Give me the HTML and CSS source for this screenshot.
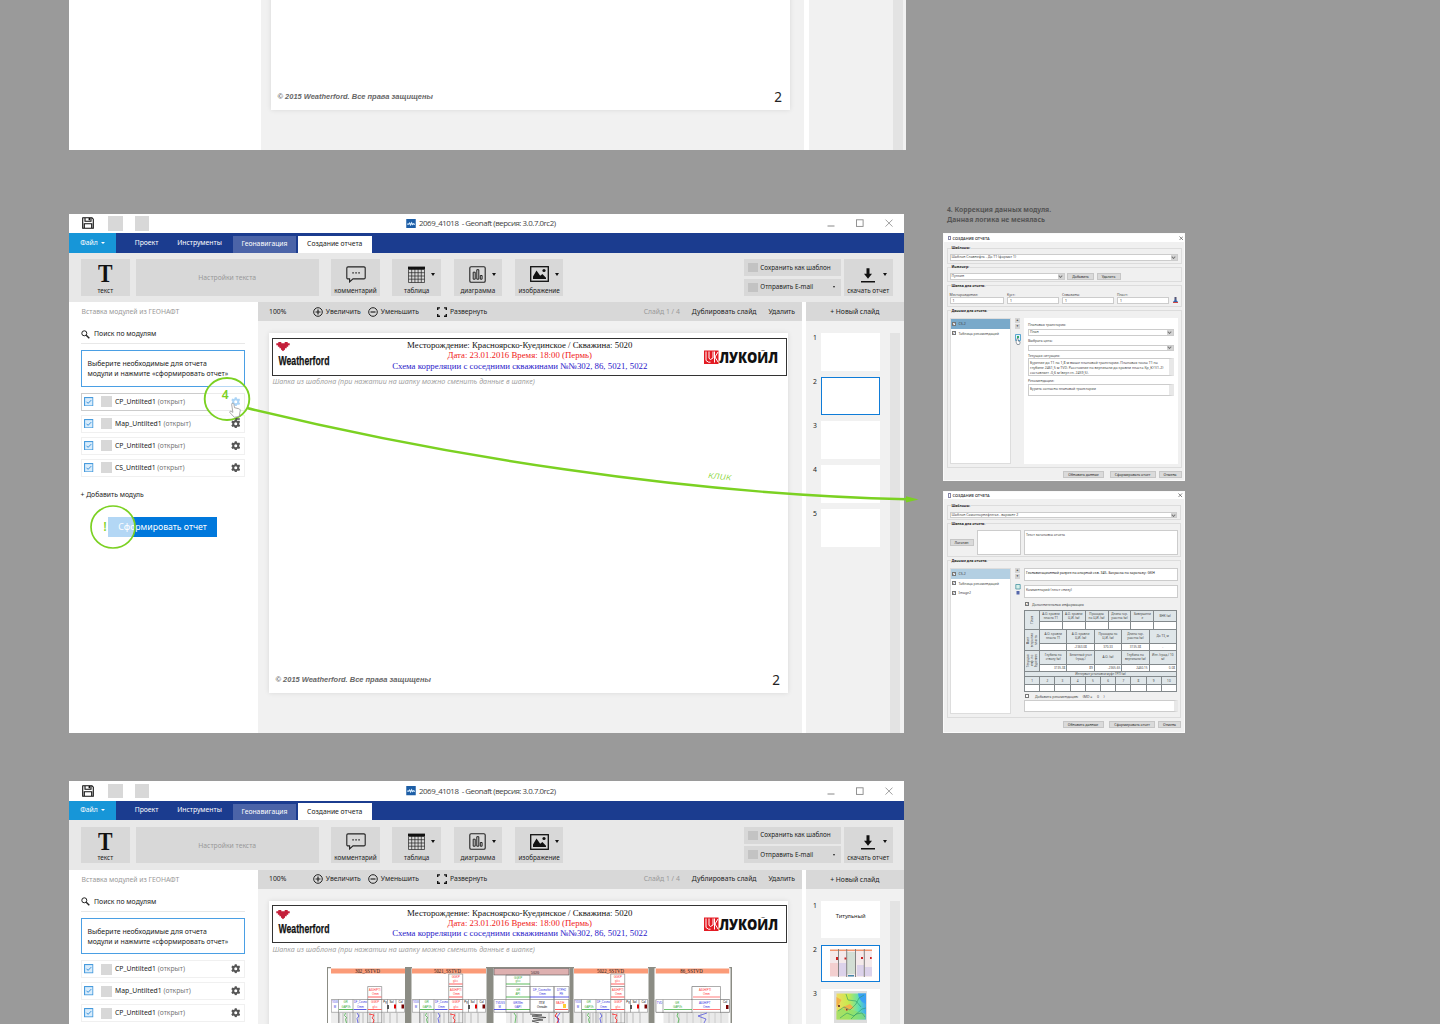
FILE: index.html
```
<!DOCTYPE html>
<html lang="ru">
<head>
<meta charset="utf-8">
<title>Создание отчета</title>
<link rel="stylesheet" href="styles.css">
</head>
<body>
<svg class="defs" width="0" height="0">
  <symbol id="save" viewBox="0 0 12 12"><path d="M1 .7h9l1.3 1.5v9.1H.7V.9z M3 .7v3.6h6V.7 M2.3 11.3V6.8h7.4v4.5" fill="none" stroke="#111" stroke-width="1.1"/><path d="M6.6 1h1.5v2.3H6.6z" fill="#111"/></symbol>
  <symbol id="logo" viewBox="0 0 10 10"><path d="M0 0h10v10H0z" fill="#1d5ea6"/><path d="M1 5.400h1.600l1-1.200 1 2 1-2.200 1 1.900 1-1 1 .7H9" fill="none" stroke="#d7ecff" stroke-width="1.200"/></symbol>
  <symbol id="comment" viewBox="0 0 20 17"><path d="M2 .9h16a1.2 1.2 0 0 1 1.2 1.2v9.6a1.2 1.2 0 0 1-1.2 1.2H7L3.6 15.9V12.9H2A1.2 1.2 0 0 1 .8 11.700V2.100A1.200 1.200 0 0 1 2 .9z" fill="none" stroke="#222" stroke-width="1.1"/><path d="M6.300 6.200h1.500v1.300H6.300zM9.300 6.200h1.500v1.300H9.300zM12.300 6.200h1.500v1.300h-1.500z" fill="#222"/></symbol>
  <symbol id="table" viewBox="0 0 17 17"><path d="M.5 3.500h16v13H.5zM.5 6.700h16M.5 10h16M.5 13.200h16M3.700 3v13.500M6.900 3v13.500M10.100 3v13.500M13.300 3v13.500" fill="none" stroke="#222" stroke-width=".7"/><path d="M0 .6h17v2.700H0z" fill="#111"/></symbol>
  <symbol id="chart" viewBox="0 0 17 17"><rect x=".8" y=".8" width="15.400" height="15.400" rx="1.300" fill="none" stroke="#222" stroke-width="1.100"/><path d="M4.200 6.200h2v7h-2zM7.800 3.700h2v9.500h-2zM11.300 9.500h1.800v3.700h-1.800z" fill="none" stroke="#222" stroke-width="1"/></symbol>
  <symbol id="image" viewBox="0 0 19 16"><rect x=".7" y=".7" width="17.600" height="14.600" fill="none" stroke="#111" stroke-width="1.300"/><path d="M3 13V10.600L6.500 4.500l3.700 5.200 2.200-1.600L16 11.700V13z" fill="#111"/><circle cx="14" cy="4.500" r="1.600" fill="#111"/></symbol>
  <symbol id="download" viewBox="0 0 14 15"><path d="M5.500.3h3v5.500H11L7 10.800 3 5.800h2.500zM0 13h14v1.400H0z" fill="#111"/></symbol>
  <symbol id="plus" viewBox="0 0 10 10"><circle cx="5" cy="5" r="4.300" fill="none" stroke="#222"/><path d="M2.500 5h5M5 2.500v5" stroke="#222" stroke-width="1.200"/></symbol>
  <symbol id="minus" viewBox="0 0 10 10"><circle cx="5" cy="5" r="4.300" fill="none" stroke="#222"/><path d="M2.500 5h5" stroke="#222" stroke-width="1.200"/></symbol>
  <symbol id="expand" viewBox="0 0 10 10"><path d="M.7 3V.9H3M7 .9h2.300V3M9.300 7v2.200H7M3 9.200H.7V7" fill="none" stroke="#111" stroke-width="1.400"/></symbol>
  <symbol id="search" viewBox="0 0 9 9"><circle cx="3.300" cy="3.300" r="2.500" fill="none" stroke="#222"/><path d="M5.200 5.200L8.300 8.300" stroke="#222" stroke-width="1.400"/></symbol>
  <symbol id="check" viewBox="0 0 10 10"><rect x=".6" y=".6" width="8.800" height="8.800" fill="#d9ecfb" stroke="#3f97dc" stroke-width="1.100"/><path d="M2.600 5l1.700 1.700 3.300-3.400" fill="none" stroke="#2f8bd6" stroke-width="1"/></symbol>
  <symbol id="gear" viewBox="0 0 10 10"><path d="M4 .2h2l.3 1.300 1 .5 1.300-.5 1.100 1.800-1 1v1.400l1 1-1.100 1.800-1.300-.5-1 .5L6 9.800H4l-.3-1.300-1-.5-1.300.5-1.100-1.800 1-1V4.300l-1-1 1.100-1.800 1.300.5 1-.5z M5 3.400a1.600 1.600 0 1 0 0 3.200a1.600 1.600 0 1 0 0-3.200z" fill="currentColor" fill-rule="evenodd"/></symbol>
  <symbol id="winbtns" viewBox="0 0 66 8"><path d="M.5 7h7" stroke="#888"/><rect x="29.500" y=".8" width="6.600" height="6.600" fill="none" stroke="#888" stroke-width=".9"/><path d="M58.500.6l7 7M65.500.6l-7 7" stroke="#888" stroke-width=".8"/></symbol>
  <symbol id="weatherford" viewBox="0 0 56 26"><path d="M3.800 1h3v1.300H10.200V1h3v1.300h2v2h-1.500v1.500h-1.500v1.500H10.500v1.500H6.500V7.300H4.900V5.800H3.400V4.300H1.800v-2h2z M6.600 8.500h3.800l-1.900 1.800z" fill="#c41f3a"/><text x="4" y="23.500" font-family="Liberation Sans" font-weight="700" font-size="12" textLength="51" lengthAdjust="spacingAndGlyphs" fill="#111" stroke="#111" stroke-width=".25">Weatherford</text></symbol>
  <symbol id="lukoil" viewBox="0 0 75 15"><path d="M0 .5h14.500v13.500H0z" fill="#e31b23"/><path d="M2 1.500v9l2.500 1.700h2M5 1.500v6.800l1.500 1.200L9 8V1.500M10.500 1.500v11M14 2l-3 5 3 5" fill="none" stroke="#fff" stroke-width="1"/><text x="15.200" y="12.600" font-family="Open Sans" font-weight="800" font-size="15.600" textLength="59" lengthAdjust="spacingAndGlyphs" fill="#111">ЛУКОЙЛ</text></symbol>
  <symbol id="well" viewBox="0 0 74 56">
    <path d="M0 0h74v56H0z" fill="#fff"/><path d="M0 1.500h74v5H0z" fill="#fb9b78"/>
    <path d="M0 46h74v10H0z" fill="#eee"/><path d="M8.500 46v10M12 46v10M16 46v10M19 46v10M24 46v10M28 46v10M32 46v10M39 46v10M43 46v10M47 46v10M53 46v10M59 46v10M66 46v10" stroke="#c4c4c4" stroke-width="1.200"/>
    <path d="M.3 32.500h73.400v12.800H.3zM7.500 32.500V56M22 32.500V56M36.700 19.500h14V56h-14zM56.500 32.500v12.800M65 32.500v12.800M36.700 32.500h14" fill="none" stroke="#777" stroke-width=".6"/>
    <g font-family="Liberation Sans" font-size="2.800"><text x="1" y="36.300" fill="#33d" textLength="6" lengthAdjust="spacingAndGlyphs">TVDSS</text><text x="2.700" y="40.500" fill="#33d">M</text><text x="12.500" y="36.300" fill="#3a3">GR</text><text x="10.500" y="40.500" fill="#3a3">GAPI/h</text><text x="23" y="36.300" fill="#33d" textLength="13" lengthAdjust="spacingAndGlyphs">DF_Cosmo</text><text x="26" y="40.500" fill="#33d">Omm</text><text x="38" y="23.500" fill="#f33" textLength="11.500" lengthAdjust="spacingAndGlyphs">A40H/PTI</text><text x="41" y="27.500" fill="#f33">Omm</text><text x="40" y="36.300" fill="#f33">GGKP</text><text x="41.500" y="40.500" fill="#f33">g/cc</text><text x="52.300" y="36">Pg</text><text x="58.500" y="36">Sol</text><text x="67.500" y="36">Col</text></g>
    <path d="M8 42.500h14" stroke="#3a3" stroke-width=".8"/><path d="M22.500 42.500h13" stroke="#33d" stroke-width=".8"/><path d="M37 42.500h13.500M37 30h13.500" stroke="#f33" stroke-width=".8"/>
    <path d="M56 38h2v4h-2z" fill="#555"/><path d="M63 37.500h2v4h-2z" fill="#d00"/><path d="M70.500 37.500h2.500v4h-2.500z" fill="#700"/>
    <path d="M14.500 46l-1 2.500 2 2-1 2 1 3.500" fill="none" stroke="#3a3" stroke-width=".7"/><path d="M26 46l2 3-2 2.500 1 4.500" fill="none" stroke="#33d" stroke-width=".7"/><path d="M38 47l5 1-2 3 2 2-1 3" fill="none" stroke="#f22" stroke-width=".8"/>
  </symbol>
  <symbol id="mini" viewBox="0 0 42 28"><path d="M0 1h42v27H0z" fill="#f4e9ea"/><path d="M0 .5h42v1.400H0z" fill="#f0946f"/><path d="M0 14h8v13H0z" fill="#f3cfcf"/><path d="M9 14h7.500v13H9zM27 16h7v11h-7zM35 18h7v9h-7z" fill="#dcd2ea"/><path d="M17 3h8v22h-8z" fill="#d3ded4"/><path d="M8.500 0v28M16.700 0v28M25.500 0v28M34.300 0v28" stroke="#777" stroke-width=".9"/><path d="M6 8h2v3H6zM14.500 8.500h1.800v2h-1.800zM31 8h2v2h-2zM40 8h1.700v2H40z" fill="#c22"/><path d="M18 26h6v1.500h-6z" fill="#48a"/></symbol>
</svg>

<section class="board board-prev">
  <div class="side"></div>
  <div class="stage"><div class="slide"><div class="slide-foot"><span class="copy">© 2015 Weatherford. Все права защищены</span><span class="pageno">2</span></div></div></div>
  <div class="slides"><div class="scroll"></div></div>
</section>

<section class="board board-main">
  <header class="titlebar">
    <svg class="ic-save"><use href="#save"/></svg><i class="sq"></i><i class="sq"></i>
    <div class="apptitle"><svg class="ic-logo"><use href="#logo"/></svg><span>2069_41018&nbsp; - Geonaft (версия: 3.0.7.0rc2)</span></div>
    <svg class="winbtns"><use href="#winbtns"/></svg>
  </header>
  <nav class="tabs"><span class="tab file">Файл<i class="caret"></i></span><span class="tab t-proj">Проект</span><span class="tab t-inst">Инструменты</span><span class="tab t-geo">Геонавигация</span><span class="tab t-rep">Создание отчета</span></nav>
  <div class="ribbon">
    <div class="rb"><b class="bigt">T</b><span>текст</span></div>
    <div class="rb settings">Настройки текста</div>
    <div class="rb"><div class="ico"><svg class="i-com"><use href="#comment"/></svg></div><span>комментарий</span></div>
    <div class="rb"><div class="ico"><svg class="i-tab"><use href="#table"/></svg><i class="caret"></i></div><span>таблица</span></div>
    <div class="rb"><div class="ico"><svg class="i-tab"><use href="#chart"/></svg><i class="caret"></i></div><span>диаграмма</span></div>
    <div class="rb"><div class="ico"><svg class="i-img"><use href="#image"/></svg><i class="caret"></i></div><span>изображение</span></div>
    <div class="export"><div class="ex"><i></i>Сохранить как шаблон</div><div class="ex"><i></i>Отправить E-mail<b class="caret"></b></div></div>
    <div class="rb dl"><div class="ico"><svg class="i-dl"><use href="#download"/></svg><i class="caret"></i></div><span>скачать отчет</span></div>
  </div>
  <div class="work">
    <aside class="side">
      <div class="side-title">Вставка модулей из ГЕОНАФТ</div>
      <div class="search"><svg><use href="#search"/></svg>Поиск по модулям</div>
      <div class="hint">Выберите необходимые для отчета<br>модули и нажмите «сформировать отчет»</div>
      <div class="mod active"><svg class="chk"><use href="#check"/></svg><i></i><span>CP_Untilted1 <em>(открыт)</em></span><svg class="gear"><use href="#gear"/></svg></div>
      <div class="mod"><svg class="chk"><use href="#check"/></svg><i></i><span>Map_Untilted1 <em>(открыт)</em></span><svg class="gear"><use href="#gear"/></svg></div>
      <div class="mod"><svg class="chk"><use href="#check"/></svg><i></i><span>CP_Untilted1 <em>(открыт)</em></span><svg class="gear"><use href="#gear"/></svg></div>
      <div class="mod"><svg class="chk"><use href="#check"/></svg><i></i><span>CS_Untilted1 <em>(открыт)</em></span><svg class="gear"><use href="#gear"/></svg></div>
      <div class="addmod">+ Добавить модуль</div>
      <div class="build">Сформировать отчет</div>
    </aside>
    <main class="stage">
      <div class="toolbar"><span class="pct">100%</span><svg><use href="#plus"/></svg><span class="zin">Увеличить</span><svg><use href="#minus"/></svg><span class="zout">Уменьшить</span><svg><use href="#expand"/></svg><span>Развернуть</span><span class="count">Слайд 1 / 4</span><span class="dup">Дублировать слайд</span><span>Удалить</span></div>
      <div class="slide">
        <div class="head"><svg class="wf"><use href="#weatherford"/></svg><div class="htext"><p>Месторождение: Красноярско-Куединское / Скважина: 5020</p><p class="red">Дата: 23.01.2016 Время: 18:00 (Пермь)</p><p class="blue">Схема корреляции с соседними скважинами №№302, 86, 5021, 5022</p></div><svg class="lk"><use href="#lukoil"/></svg></div>
        <div class="note">Шапка из шаблона (при нажатии на шапку можно сменить данные в шапке)</div>
        <div class="slide-foot"><span class="copy">© 2015 Weatherford. Все права защищены</span><span class="pageno">2</span></div>
      </div>
    </main>
    <div class="slides">
      <div class="newslide">+ Новый слайд</div>
      <div class="thumbrow"><ol class="thumbs"><li>1<div></div></li><li>2<div class="sel"></div></li><li>3<div></div></li><li>4<div></div></li><li>5<div></div></li></ol><div class="scroll"></div></div>
    </div>
  </div>
</section>

<section class="board board-next">
  <header class="titlebar">
    <svg class="ic-save"><use href="#save"/></svg><i class="sq"></i><i class="sq"></i>
    <div class="apptitle"><svg class="ic-logo"><use href="#logo"/></svg><span>2069_41018&nbsp; - Geonaft (версия: 3.0.7.0rc2)</span></div>
    <svg class="winbtns"><use href="#winbtns"/></svg>
  </header>
  <nav class="tabs"><span class="tab file">Файл<i class="caret"></i></span><span class="tab t-proj">Проект</span><span class="tab t-inst">Инструменты</span><span class="tab t-geo">Геонавигация</span><span class="tab t-rep">Создание отчета</span></nav>
  <div class="ribbon">
    <div class="rb"><b class="bigt">T</b><span>текст</span></div>
    <div class="rb settings">Настройки текста</div>
    <div class="rb"><div class="ico"><svg class="i-com"><use href="#comment"/></svg></div><span>комментарий</span></div>
    <div class="rb"><div class="ico"><svg class="i-tab"><use href="#table"/></svg><i class="caret"></i></div><span>таблица</span></div>
    <div class="rb"><div class="ico"><svg class="i-tab"><use href="#chart"/></svg><i class="caret"></i></div><span>диаграмма</span></div>
    <div class="rb"><div class="ico"><svg class="i-img"><use href="#image"/></svg><i class="caret"></i></div><span>изображение</span></div>
    <div class="export"><div class="ex"><i></i>Сохранить как шаблон</div><div class="ex"><i></i>Отправить E-mail<b class="caret"></b></div></div>
    <div class="rb dl"><div class="ico"><svg class="i-dl"><use href="#download"/></svg><i class="caret"></i></div><span>скачать отчет</span></div>
  </div>
  <div class="work">
    <aside class="side">
      <div class="side-title">Вставка модулей из ГЕОНАФТ</div>
      <div class="search"><svg><use href="#search"/></svg>Поиск по модулям</div>
      <div class="hint">Выберите необходимые для отчета<br>модули и нажмите «сформировать отчет»</div>
      <div class="mod"><svg class="chk"><use href="#check"/></svg><i></i><span>CP_Untilted1 <em>(открыт)</em></span><svg class="gear"><use href="#gear"/></svg></div>
      <div class="mod"><svg class="chk"><use href="#check"/></svg><i></i><span>Map_Untilted1 <em>(открыт)</em></span><svg class="gear"><use href="#gear"/></svg></div>
      <div class="mod"><svg class="chk"><use href="#check"/></svg><i></i><span>CP_Untilted1 <em>(открыт)</em></span><svg class="gear"><use href="#gear"/></svg></div>
    </aside>
    <main class="stage">
      <div class="toolbar"><span class="pct">100%</span><svg><use href="#plus"/></svg><span class="zin">Увеличить</span><svg><use href="#minus"/></svg><span class="zout">Уменьшить</span><svg><use href="#expand"/></svg><span>Развернуть</span><span class="count">Слайд 1 / 4</span><span class="dup">Дублировать слайд</span><span>Удалить</span></div>
      <div class="slide">
        <div class="head"><svg class="wf"><use href="#weatherford"/></svg><div class="htext"><p>Месторождение: Красноярско-Куединское / Скважина: 5020</p><p class="red">Дата: 23.01.2016 Время: 18:00 (Пермь)</p><p class="blue">Схема корреляции с соседними скважинами №№302, 86, 5021, 5022</p></div><svg class="lk"><use href="#lukoil"/></svg></div>
        <div class="note">Шапка из шаблона (при нажатии на шапку можно сменить данные в шапке)</div>
        <svg class="logs" viewBox="0 0 405 56" font-family="Liberation Sans">
          <path d="M0 0h405v56H0z" fill="#8b8c84"/><path d="M1 1.200h76V56H1zM84.500 1.200h75V56h-75zM166.500 1.200h76V56h-76zM246.500 1.200h75V56h-75zM327.500 1.200H403.500V56H327.500z" fill="#fff"/>
          <use href="#well" x="4" width="74" height="56"/><use href="#well" x="85" width="74" height="56"/><use href="#well" x="247" width="74" height="56"/><use href="#well" x="328.500" width="74" height="56"/>
          <path d="M121.700 7h14v12.500h-14zM283.700 7h14v12.500h-14z" fill="#fff" stroke="#777" stroke-width=".6"/>
          <path d="M122 17h13.500M284 17h13.500" stroke="#f33" stroke-width=".8"/><g font-size="2.800" fill="#f33"><text x="124.700" y="11">GGKP</text><text x="126" y="15">g/cc</text><text x="286.700" y="11">GGKP</text><text x="288" y="15">g/cc</text></g>
          <path d="M329 32.500h73.500v12.800H329zM336 32.500V56M365 19.500h28.500V56H365z" fill="#fff" stroke="#777" stroke-width=".6"/><path d="M329 46h73.500v10H329zM364 19.800h-35v12.400h35z" fill="#fff"/>
          <path d="M336.500 46h65v10h-65z" fill="#e9e9e9"/><path d="M342 46v10M347 46v10M352 46v10M360 46v10M366 46v10M374 46v10M382 46v10M388 46v10M394 46v10" stroke="#ccc"/>
          <path d="M351 46l-1 3 2 3-1 4" fill="none" stroke="#3a3" stroke-width=".7"/><path d="M380 46l-9 3 8 3-2 4" fill="none" stroke="#44d" stroke-width=".7"/><path d="M366 30h27M366 42.500h27" stroke="#f44" stroke-width=".7"/><path d="M337 42.500h28" stroke="#3a3" stroke-width=".7"/>
          <g font-size="2.800"><text x="329.700" y="36.500" fill="#33d">TVD</text><text x="348" y="36.500" fill="#3a3">GR</text><text x="346" y="41" fill="#3a3">GAPI/h</text><text x="372" y="23.500" fill="#f33">A40H/PTI</text><text x="376" y="27.500" fill="#f33">Omm</text><text x="372" y="36.500" fill="#33d">A40H/PT</text><text x="376" y="41" fill="#33d">Omm</text><text x="396" y="36">Col</text></g><path d="M399 38h2.500v4H399z" fill="#700"/>
          <path d="M167 1.500h75V8h-75z" fill="#deb0b0" stroke="#555" stroke-width=".6"/>
          <path d="M179 8h24v37.300h-24zM203 19.500h24v25.800h-24zM227 19.500h15v25.800h-15zM167 32.500h75v12.800h-75zM179 19.500h24" fill="none" stroke="#777" stroke-width=".6"/>
          <path d="M179 17h24M179 30h24M179 42.500h24" stroke="#3a3" stroke-width=".8"/><path d="M203 30h39M167 42.500h12" stroke="#33d" stroke-width=".8"/><path d="M228 42.500h13" stroke="#f33" stroke-width=".8"/>
          <path d="M179 46h63v10h-63z" fill="#eee"/><path d="M184 46v10M190 46v10M196 46v10M222 46v10M227 46v10M236 46v10" stroke="#bbb"/><path d="M203 47l12 1-10 1 14 1.500-13 1 10 1.500-11 1 7 2" fill="none" stroke="#444" stroke-width=".8"/><path d="M187 46l2 3-1 7" fill="none" stroke="#3a3" stroke-width=".7"/><path d="M230 46l-2 3 4 3-2 4" fill="none" stroke="#e22"/><path d="M233 46l-3 4 2 6" fill="none" stroke="#33d" stroke-width=".7"/><path d="M236 37h3v4h-3z" fill="#fc3"/>
          <g font-size="2.800"><text x="187" y="11.500" fill="#3a3">GGKP</text><text x="188.500" y="15" fill="#3a3">g/cc</text><text x="189" y="24" fill="#3a3">GR</text><text x="188.500" y="28" fill="#3a3">API</text><text x="206" y="23.500" fill="#33d">DF_Cosmofite</text><text x="212" y="27.500" fill="#33d">Omm</text><text x="230" y="23.500" fill="#33d">DTPH2</text><text x="232.500" y="27.500" fill="#33d">PE</text><text x="168.500" y="36.500" fill="#33d">TVDSS</text><text x="171.500" y="41" fill="#33d">M</text><text x="186" y="36.500" fill="#33d">GR/Wm</text><text x="187.500" y="41" fill="#33d">GAPI</text><text x="212" y="36.500">ПГИ</text><text x="210" y="41">Онлайн</text><text x="229" y="36.500" fill="#f33">BAZ/H</text></g>
          <g font-family="Liberation Serif" font-size="5.800" text-anchor="middle" fill="#222"><text x="40.500" y="5.800" textLength="25" lengthAdjust="spacingAndGlyphs">302_SSTVD</text><text x="120.500" y="5.800" textLength="27" lengthAdjust="spacingAndGlyphs">5021_SSTVD</text><text x="208" y="6.500" font-size="4.200">5020</text><text x="283.500" y="5.800" textLength="27" lengthAdjust="spacingAndGlyphs">5022_SSTVD</text><text x="364.500" y="5.800" textLength="22.500" lengthAdjust="spacingAndGlyphs">86_SSTVD</text></g>
        </svg>
      </div>
    </main>
    <div class="slides">
      <div class="newslide">+ Новый слайд</div>
      <div class="thumbrow"><ol class="thumbs"><li>1<div>Титульный</div></li><li>2<div class="sel"><svg class="mini"><use href="#mini"/></svg></div></li><li>3<div><svg class="map" viewBox="0 0 33 32"><defs><linearGradient id="g"><stop offset="0" stop-color="#f0dc62"/><stop offset=".4" stop-color="#c6ea4e"/><stop offset=".75" stop-color="#5fe0b0"/><stop offset="1" stop-color="#3fa8f0"/></linearGradient></defs><path d="M0 0h33v32H0z" fill="#ddd"/><path d="M2.500 2.500h29.500v26H2.500z" fill="url(#g)"/><path d="M2.500 20c8-5 14-1 22 1l7 2v5.500h-29z" fill="#8be06a" opacity=".7"/><path d="M24 2.500h8V13l-4-2-3-4z" fill="#3aa0f2"/><path d="M2.500 6l5 3-3 5-2 2zM9 16l7-3 4 4-8 3z" fill="#f2b04a"/><path d="M4 20l6-4 6 3 6-6 3-6 5-3M6 27l7-5 7 3 8-7 4-1M12 3l2 6 8 1 5 6M17 28l5-5 6-1 3 4" fill="none" stroke="#2a9a6a" stroke-width=".6"/><path d="M4 14h2v2H4zM12 18h1.500v1.500H12z" fill="#743"/></svg></div></li></ol><div class="scroll"></div></div>
    </div>
  </div>
</section>

<h4 class="caption">4. Коррекция данных модуля.<br>Данная логика не менялась</h4>

<section class="dlg dlg1">
  <header><i></i><b>СОЗДАНИЕ ОТЧЕТА</b><svg class="x" viewBox="0 0 5 5"><path d="M.5.500l4 4M4.500.500l-4 4" stroke="#444" stroke-width=".7"/></svg></header>
  <div class="grp g-tpl"><h6>Шаблоны:</h6><div class="sel-box">Шаблон Славнефть - До Т1 (формат 1)<s></s></div></div>
  <div class="grp g-eng"><h6>Инженер:</h6><div class="row"><div class="sel-box w115">Пупкин<s></s></div><div class="btn w27">Добавить</div><div class="btn w24">Удалить</div></div></div>
  <div class="grp g-cap"><h6>Шапка для отчета:</h6><div class="fields"><label>Месторождение:<span>1</span></label><label>Куст:<span>1</span></label><label>Скважина:<span>1</span></label><label>Пласт:<span>1</span></label><svg viewBox="0 0 5 6"><path d="M1.500 0h2v3h-2z" fill="#557"/><path d="M0 5l2.500-3L5 5z" fill="#36a"/><path d="M0 5h5v1H0z" fill="#c44"/></svg></div></div>
  <div class="grp g-data"><h6>Данные для отчета:</h6><div class="cols">
    <div class="list"><p class="on"><i>✓</i>CS-2</p><p><i>✓</i>Таблица рекомендаций</p></div>
    <div class="mid"><i>▴</i><i>▾</i><svg viewBox="0 0 6 11"><path d="M.5.500h5v6h-5z" fill="#e2f3fb" stroke="#3a94c8" stroke-width=".8"/><path d="M2 2h2v2H2z" fill="#3a6"/><path d="M2 4.500h1.200v2.500l1.800.6V9L4.300 10.500H2.200L1 8z" fill="#fff" stroke="#345" stroke-width=".5"/></svg></div>
    <div class="form"><label>Плановая траектория:</label><div class="sel-box">План<s></s></div><label>Выбрать цель:</label><div class="sel-box"><s></s></div><label>Текущая ситуация:</label><div class="area a18">Бурение до Т1 на 1,8 м выше плановой траектории. Плановая точка Т1 на<br>глубине 2461,5 м TVD. Расстояние по вертикали до кровли пласта Kp_Ю1(1-2)<br>составляет -0,6 м (верт.гл. 2459,5).</div><label>Рекомендации:</label><div class="area a12">Бурить согласно плановой траектории</div></div>
  </div></div>
  <footer><div class="btn w40">Обновить данные</div><div class="btn w46">Сформировать отчет</div><div class="btn w23">Отмена</div></footer>
</section>

<section class="dlg dlg2">
  <header><i></i><b>СОЗДАНИЕ ОТЧЕТА</b><svg class="x" viewBox="0 0 5 5"><path d="M.5.500l4 4M4.500.500l-4 4" stroke="#444" stroke-width=".7"/></svg></header>
  <div class="grp g-tpl"><h6>Шаблоны:</h6><div class="sel-box">Шаблон Самотлорнефтегаз - вариант 2<s></s></div></div>
  <div class="grp g-logo"><h6>Шапка для отчета:</h6><div class="logo-row"><div class="btn w24">Логотип</div><div class="pic"></div><div class="area">Текст заголовка отчета</div></div></div>
  <div class="grp g-data"><h6>Данные для отчета:</h6><div class="cols">
    <div class="list"><p class="on"><i>✓</i>CS-2</p><p><i>✓</i>Таблица рекомендаций</p><p><i>✓</i>Image2</p></div>
    <div class="mid"><i>▴</i><i>▾</i><svg viewBox="0 0 6 11"><path d="M.8.500h4.400v4.500H.8z" fill="#d6efe8" stroke="#389" stroke-width=".7"/><path d="M1.500 7h3v3.500h-3z" fill="#56a"/></svg></div>
    <div class="form f2">
      <div class="area dark">Геонавигационный разрез по опорной скв. 345. Закраска по каротажу: GKH</div>
      <div class="area">Комментарий (текст снизу)</div>
      <p class="opt"><i>✓</i>Дополнительная информация</p>
      <div class="tbl">
        <div class="blk b1"><b><span>План</span></b><div class="c6"><u>А.О. кровли<br>пласта Т1</u><u>А.О. кровли<br>Ц.И. (м)</u><u>Проходка<br>по Ц.И. (м)</u><u>Длина гор.<br>участка (м)</u><u>Завершени<br>е</u><u>ВНК (м)</u></div><div class="c6 val"><u></u><u></u><u></u><u></u><u></u><u></u></div></div>
        <div class="blk b2"><b><span>Факт<br>вскрытия<br>пласта</span></b><div class="c5"><u>А.О. кровли<br>пласта Т1</u><u>А.О. кровли<br>Ц.И. (м)</u><u>Проходка по<br>Ц.И. (м)</u><u>Длина гор.<br>участка (м)</u><u>До Т3, м</u></div><div class="c5 val"><u></u><u>-2363.08</u><u>370.33</u><u>3135.38</u><u>-</u></div></div>
        <div class="blk b3"><b><span>Текущая<br>инф. по<br>бурению</span></b><div class="c5"><u>Глубина по<br>стволу (м)</u><u>Зенитный угол<br>(град.)</u><u>А.О. (м)</u><u>Глубина по<br>вертикали (м)</u><u>Инт. (град./ 10<br>м)</u></div><div class="c5 val right"><u>3135.38</u><u>89</u><u>-2365.65</u><u>2460.15</u><u>0.08</u></div></div>
        <div class="interval">Интервал установки муфт ГРП (м)</div>
        <div class="c10"><u>1</u><u>2</u><u>3</u><u>4</u><u>5</u><u>6</u><u>7</u><u>8</u><u>9</u><u>10</u></div>
        <div class="c10 val"><u></u><u></u><u></u><u></u><u></u><u></u><u></u><u></u><u></u><u></u></div>
      </div>
      <p class="opt rec"><i></i>Добавить рекомендацию&nbsp; &nbsp; &nbsp;(MD =&nbsp; &nbsp; &nbsp;0&nbsp; &nbsp; &nbsp;)</p>
      <div class="area blank"></div>
    </div>
  </div></div>
  <footer><div class="btn w40">Обновить данные</div><div class="btn w46">Сформировать отчет</div><div class="btn w23">Отмена</div></footer>
</section>

<svg class="anno" viewBox="0 0 1440 1024">
  <g stroke="#7bd122" fill="none">
    <ellipse cx="113" cy="527" rx="22" ry="21" fill="#fff" fill-opacity=".7" stroke-width="1.700"/>
    <ellipse cx="227" cy="399" rx="22.300" ry="21" fill="#fff" fill-opacity=".6" stroke-width="1.900"/>
    <path d="M247 408C440 455 680 494 907 499.300" stroke-width="2.400"/>
  </g>
  <path d="M906 496.300l12.500 3.200-12.500 3z" fill="#7bd122"/>
  <path d="M232 403.500c1-.6 1.700 0 1.900.9l.6 3.300 4.200 1c1.300.3 1.700 1.200 1.500 2.300l-.8 4-.3 1.500-4.700.8-4.500-4.700c-.5-.9.200-1.600 1.200-1.200l1.800 1-1.200-7.800z" fill="#fff" stroke="#888" stroke-width=".7"/>
  <path d="M235.500 419h4.300" stroke="#222" stroke-width="1.200"/>
  <g fill="#7bd122" font-family="Noto Sans, sans-serif"><text x="221.700" y="398.800" font-size="12" font-weight="600">4</text><text x="103.300" y="530.500" font-size="13" font-weight="500">!</text><text x="708" y="478" font-size="10" font-style="italic" font-weight="300" textLength="23" lengthAdjust="spacingAndGlyphs" transform="rotate(6 708 479)">клик</text></g>
</svg>
</body>
</html>
```
FILE: styles.css
```
* { box-sizing: border-box; }
html { overflow: hidden; }
body { margin: 0; width: 1440px; height: 1024px; overflow: hidden; position: relative; background: #9a9a9a; color: #222; font: 6.8px/10px "Noto Sans", sans-serif; }
p, h4, h6, ol { margin: 0; padding: 0; }
i, em { font-style: normal; }
svg { display: block; flex: none; }
.defs { position: absolute; }

/* artboards on the canvas */
.board { position: absolute; left: 69px; width: 834.5px; background: #fff; overflow: hidden; display: flex; flex-direction: column; }
.board-main { top: 213.500px; height: 519.500px; }
.board-next { top: 781px; height: 243px; }
.board-prev { top: -370px; height: 520px; width: 837px; flex-direction: row; }
.board-prev .side { width: 192px; padding: 0; }
.board-prev .stage { width: 543px; margin-right: 5px; padding-top: 120px; }
.board-prev .slide { margin: 0 0 0 10px; }
.board-prev .slide-foot { height: 26px; }
.board-prev .slides { display: flex; justify-content: flex-end; padding-right: 3px; }
.board-prev .scroll { margin: 0; }

.titlebar { height: 19.500px; flex: none; display: flex; align-items: center; padding-left: 13px; }
.ic-save { width: 12px; height: 12px; margin-right: 14px; }
.sq { width: 14.500px; height: 14.500px; background: #d8d8d8; margin-right: 12px; }
.apptitle { display: flex; align-items: center; margin-left: 245px; gap: 3px; font: 7.900px/12px "Open Sans", sans-serif; color: #444; letter-spacing: -.46px; white-space: nowrap; width: 380px; }
.ic-logo { width: 10px; height: 9.500px; }
.winbtns { width: 66px; height: 8px; margin-left: 41px; }

.tabs { height: 19.500px; flex: none; background: #1b3c8f; display: flex; color: #fff; }
.tab { display: flex; align-items: center; justify-content: center; white-space: nowrap; }
.caret { width: 0; height: 0; border: 2.700px solid transparent; border-top: 3px solid currentColor; border-bottom: 0; }
.file { width: 47px; background: #1796d8; gap: 3px; }
.file .caret { border-width: 2.500px 2px 0; }
.t-proj { width: 61px; }
.t-inst { width: 45px; }
.t-geo { width: 63px; margin: 3px 0 0 11px; background: #4b64a8; }
.t-rep { width: 74.500px; margin: 2.500px 0 0 1.500px; background: #fff; color: #222; }

.ribbon { height: 49.500px; flex: none; background: #e8e8e8; display: flex; padding: 6.500px 11px 0 12px; font-size: 6.350px; }
.rb { width: 48.700px; height: 36.500px; background: #d8d8d8; margin-right: 12.500px; display: flex; flex-direction: column; align-items: center; padding-top: 5px; white-space: nowrap; }
.rb:first-child { margin-right: 6px; }
.rb > span { line-height: 9px; margin-top: 1.500px; }
.bigt { font: 700 25px/20px "Liberation Serif", serif; height: 20px; color: #111; transform: scaleX(.87); }
.settings { width: 183px; justify-content: center; padding: 2px 0 0; color: #999; margin-right: 12.500px; font-size: 6.800px; }
.ico { display: grid; grid-template-columns: 1fr auto 1fr; align-items: center; width: 100%; height: 20px; color: #111; }
.ico svg { grid-column: 2; }
.ico .caret { grid-column: 3; margin-left: 6px; }
.i-com { width: 20px; height: 17px; }
.i-tab { width: 17px; height: 17px; }
.i-img { width: 19px; height: 16px; }
.i-dl { width: 14px; height: 15px; margin-top: 2px; }
.dl .ico .caret { margin-left: 8px; }
.export { display: flex; flex-direction: column; gap: 2.500px; margin: 0 3px 0 auto; }
.ex { width: 97px; height: 17px; background: #d8d8d8; display: flex; align-items: center; padding-left: 4.500px; white-space: nowrap; }
.ex i { width: 9.500px; height: 9px; background: #c3c3c3; margin-right: 2.500px; }
.ex .caret { margin: 0 6px 0 auto; border-width: 2px 1.800px 0; }
.rb.dl { margin-right: 0; }

.work { display: flex; flex: 1; min-height: 0; }
.side { width: 189px; flex: none; padding: 5px 13.500px 0 11.500px; background: #fff; }
.side-title { color: #999; height: 10px; padding-left: 1px; }
.search { display: flex; align-items: center; height: 19px; margin-top: 8px; border-bottom: 1px solid #e8e8e8; padding-left: .5px; font-size: 6.900px; }
.search svg { width: 9px; height: 9px; margin-right: 4px; }
.hint { height: 36.500px; margin: 6px 0; border: 1px solid #4a9fe4; padding: 8px 0 0 6px; white-space: nowrap; font-size: 6.920px; }
.mod { height: 18px; margin-bottom: 4px; border: 1px solid #f0f0f0; display: flex; align-items: center; padding: 0 3.500px 0 2.500px; }
.mod.active { border-color: #ccc; }
.mod i { width: 11px; height: 11px; background: #d8d8d8; margin: 0 3px 0 7.500px; }
.mod em { color: #777; }
.chk { width: 9.500px; height: 9.500px; }
.gear { width: 9.500px; height: 9.500px; margin-left: auto; color: #555; }
.active .gear { color: #2f95e8; }
.addmod { margin-top: 13px; }
.build { width: 109px; height: 20px; margin: 17px 0 0 27.500px; background: #0078dc; color: #fff; font-size: 8.700px; line-height: 20px; text-align: center; white-space: nowrap; }

.stage { width: 543.500px; flex: none; background: #f1f1f1; margin-right: 4.500px; }
.toolbar { height: 19px; background: #d8d8d8; display: flex; align-items: center; padding: 0 6.500px 0 11px; white-space: nowrap; }
.toolbar svg { width: 10px; height: 10px; margin-right: 3px; }
.pct { margin-right: 26.500px; }
.zin { margin-right: 7px; }
.zout { margin-right: 18px; }
.count { margin-left: auto; color: #999; }
.dup { margin: 0 12px; }
.slide { width: 519px; height: 360px; margin: 12px 0 0 11px; background: #fff; box-shadow: 0 0 5px rgba(0,0,0,.1); padding: 4.500px 1.500px 0 3px; display: flex; flex-direction: column; }
.head { height: 38px; flex: none; border: 1px solid #333; display: flex; align-items: center; justify-content: space-between; padding: 0 6px 2px 1px; }
.wf { width: 57px; height: 26px; margin-bottom: 3px; }
.lk { width: 75px; height: 15px; margin-top: 3px; }
.htext { font: 8.800px/10.300px "Liberation Serif", serif; text-align: center; color: #111; white-space: nowrap; margin-left: 4px; }
.red { color: #f01818; }
.blue { color: #2a17c9; }
.note { font-style: italic; font-size: 7.150px; color: #a3a3a3; margin-top: .5px; padding-left: .5px; white-space: nowrap; }
.slide-foot { margin-top: auto; display: flex; justify-content: space-between; align-items: center; height: 27px; padding: 0 6.500px 0 3.500px; }
.copy { font: italic 700 7.470px/10px "Liberation Sans", sans-serif; color: #666; white-space: nowrap; }
.pageno { font-size: 13.500px; line-height: 14px; }
.logs { width: 405px; height: 56px; margin: 13.500px 0 0 54.500px; }

.slides { flex: 1; background: #f1f1f1; }
.newslide { height: 19px; background: #d8d8d8; line-height: 19px; text-align: center; }
.thumbrow { display: flex; height: 500px; padding-top: 12px; justify-content: space-between; padding-right: 4px; }
.scroll { width: 10px; background: #e3e3e3; }
.thumbs { list-style: none; padding-left: 7px; }
.thumbs li { display: flex; height: 44px; line-height: 9px; gap: 4px; }
.thumbs div { width: 59.500px; height: 37.500px; background: #fff; display: flex; align-items: center; justify-content: center; padding-bottom: 6px; font-size: 5.750px; }
.thumbs .sel { border: 1px solid #0f7cd8; padding: 0; }
.mini { width: 42px; height: 28px; }
.map { width: 33px; height: 32px; margin-top: 6px; }

.caption { position: absolute; left: 947px; top: 205px; font-size: 6.750px; line-height: 9.800px; color: #555; white-space: nowrap; }

/* module dialogs */
.dlg { position: absolute; left: 942.500px; width: 242.500px; background: #f0f0f0; border: 1px solid #fafafa; font-size: 3.500px; line-height: 5px; color: #444; display: flex; flex-direction: column; padding: 0 2.500px 0 3px; white-space: nowrap; }
.dlg1 { top: 233px; height: 247.500px; }
.dlg2 { top: 490.500px; height: 242px; width: 242px; }
.dlg header { height: 8px; margin: 0 -2.500px 0 -3px; background: #fff; display: flex; align-items: center; padding: 0 1px 0 4px; flex: none; }
.dlg header i { width: 3px; height: 4.500px; border: .5px solid #88a; margin-right: 2px; }
.dlg header b { font-size: 3.900px; font-weight: 600; }
.dlg2 header { height: 7.500px; }
.x { width: 4.500px; height: 4.500px; margin-left: auto; }
.grp { border: 1px solid #dcdcdc; margin-bottom: 3px; padding: 0 3px 0 2px; flex: none; }
.grp h6 { width: max-content; font-size: 3.500px; line-height: 4px; margin: -2.500px 0 0 1px; padding: 0 1px; background: #f0f0f0; color: #222; }
.g-tpl { height: 16px; margin-top: 5.800px; }
.g-eng { height: 15.500px; }
.g-cap { height: 22px; }
.dlg1 .g-data { height: 157.500px; }
.sel-box { height: 6.500px; background: #fff; border: 1px solid #ccc; margin-top: 4px; padding-left: 1px; line-height: 4.500px; display: flex; }
.sel-box s { width: 5.500px; margin-left: auto; background: #d5d5d5; display: flex; align-items: center; justify-content: center; }
.sel-box s::after { content: ""; width: 2px; height: 2px; border: solid #777; border-width: 0 .7px .7px 0; transform: translateY(-.5px) rotate(45deg); }
.row { display: flex; gap: 2.500px; margin-top: 4px; }
.row .sel-box { margin: 0; }
.btn { height: 7px; background: #dadada; border: 1px solid #c6c6c6; text-align: center; line-height: 5px; color: #222; }
.w115 { width: 115px; } .w27 { width: 27px; } .w24 { width: 24px; } .w40 { width: 41px; } .w46 { width: 46px; } .w23 { width: 23px; }
.fields { display: grid; grid-template-columns: 54.500px 52px 52px 52px 5px; column-gap: 3px; margin-top: 4px; }
.fields label span { display: block; height: 6.500px; border: 1px solid #ccc; background: #fff; padding-left: 2px; line-height: 5px; margin-top: .5px; }
.fields svg { width: 5px; height: 6px; margin: 5.500px 0 0 1px; }
.cols { display: grid; grid-template-columns: 61.500px 13px 153.500px; margin-top: 5.500px; height: 145.500px; }
.list { background: #fff; border: 1px solid #ddd; }
.list p { height: 9.300px; display: flex; align-items: center; padding-left: 1px; }
.list .on { background: #79a9ca; }
.dlg2 .list .on { background: #b3cfe2; }
.list i, .opt i { width: 4px; height: 4px; border: .5px solid #777; margin-right: 3px; font: 3.500px/3px "DejaVu Sans", sans-serif; color: #111; background: #fff; }
.mid { display: flex; flex-direction: column; align-items: center; gap: 1px; }
.mid i { width: 5px; height: 5px; background: #d4d4d4; font: 3.500px/5px "DejaVu Sans", sans-serif; text-align: center; }
.mid svg { width: 6px; height: 11px; margin-top: 3.500px; }
.form { background: #fff; padding: 4px 4px 0; }
.form .sel-box { margin: 2px 0 1.800px; height: 6.500px; }
.form label { display: block; height: 5px; }
.area { background: #fff; border: 1px solid #ccc; line-height: 5px; padding: 1px; }
.a18 { height: 18px; margin: .5px 0 2px; border-right: 5px solid #e8e8e8; font-size: 3.560px; }
.a12 { height: 12px; margin-top: .5px; border-right: 5px solid #e8e8e8; }
.dlg footer { display: flex; justify-content: flex-end; margin-top: .5px; }
.dlg footer .w46 { margin: 0 3px 0 5.500px; }

.dlg2 .g-tpl { height: 15px; margin-top: 6.300px; }
.g-logo { height: 34px; }
.dlg2 .g-data { height: 157.500px; }
.logo-row { display: grid; grid-template-columns: 24px 44.500px 153.500px; column-gap: 3px; margin-top: 4px; height: 25.500px; align-items: stretch; }
.logo-row .btn { align-self: center; }
.pic { background: #fff; border: 1px solid #ccc; }
.f2 { background: none; padding: 0; display: flex; flex-direction: column; }
.f2 .area:nth-child(1) { height: 13px; margin-bottom: 4px; }
.f2 .area:nth-child(2) { height: 12.500px; }
.dark { color: #111; }
.opt { display: flex; align-items: center; height: 12.500px; padding-left: 1px; flex: none; }
.rec { height: 8px; }
.rec i { margin-right: 6px; }
.f2 .blank { height: 12px; border-right: 4px solid #e8e8e8; }
.tbl { background: #83898c; padding: 1px; width: 153px; height: 82px; flex: none; display: flex; flex-direction: column; gap: 1px; font-size: 3.100px; line-height: 4px; }
.tbl u { text-decoration: none; background: #dfe6e9; display: flex; align-items: center; justify-content: center; text-align: center; min-width: 0; }
.tbl .val u { background: #fff; }
.tbl .right u { justify-content: flex-end; padding-right: 1px; }
.blk { display: grid; grid-template-columns: 14px 1fr; gap: 1px; }
.blk b { grid-row: 1 / 3; background: #dfe6e9; font-weight: 400; display: flex; align-items: center; justify-content: center; }
.blk b span { writing-mode: vertical-rl; transform: rotate(180deg); text-align: center; }
.b1 { grid-template-rows: 10px 6.500px; }
.b2 { grid-template-rows: 13px 6px; }
.b3 { grid-template-rows: 13px 6px; }
.c6 { display: grid; grid-template-columns: repeat(6, 1fr); gap: 1px; }
.c5 { display: grid; grid-template-columns: repeat(5, 1fr); gap: 1px; }
.c10 { display: grid; grid-template-columns: repeat(10, 1fr); gap: 1px; flex: 1; }
.interval { height: 4.500px; background: #dfe6e9; text-align: center; }

.anno { position: absolute; left: 0; top: 0; width: 1440px; height: 1024px; }
```
